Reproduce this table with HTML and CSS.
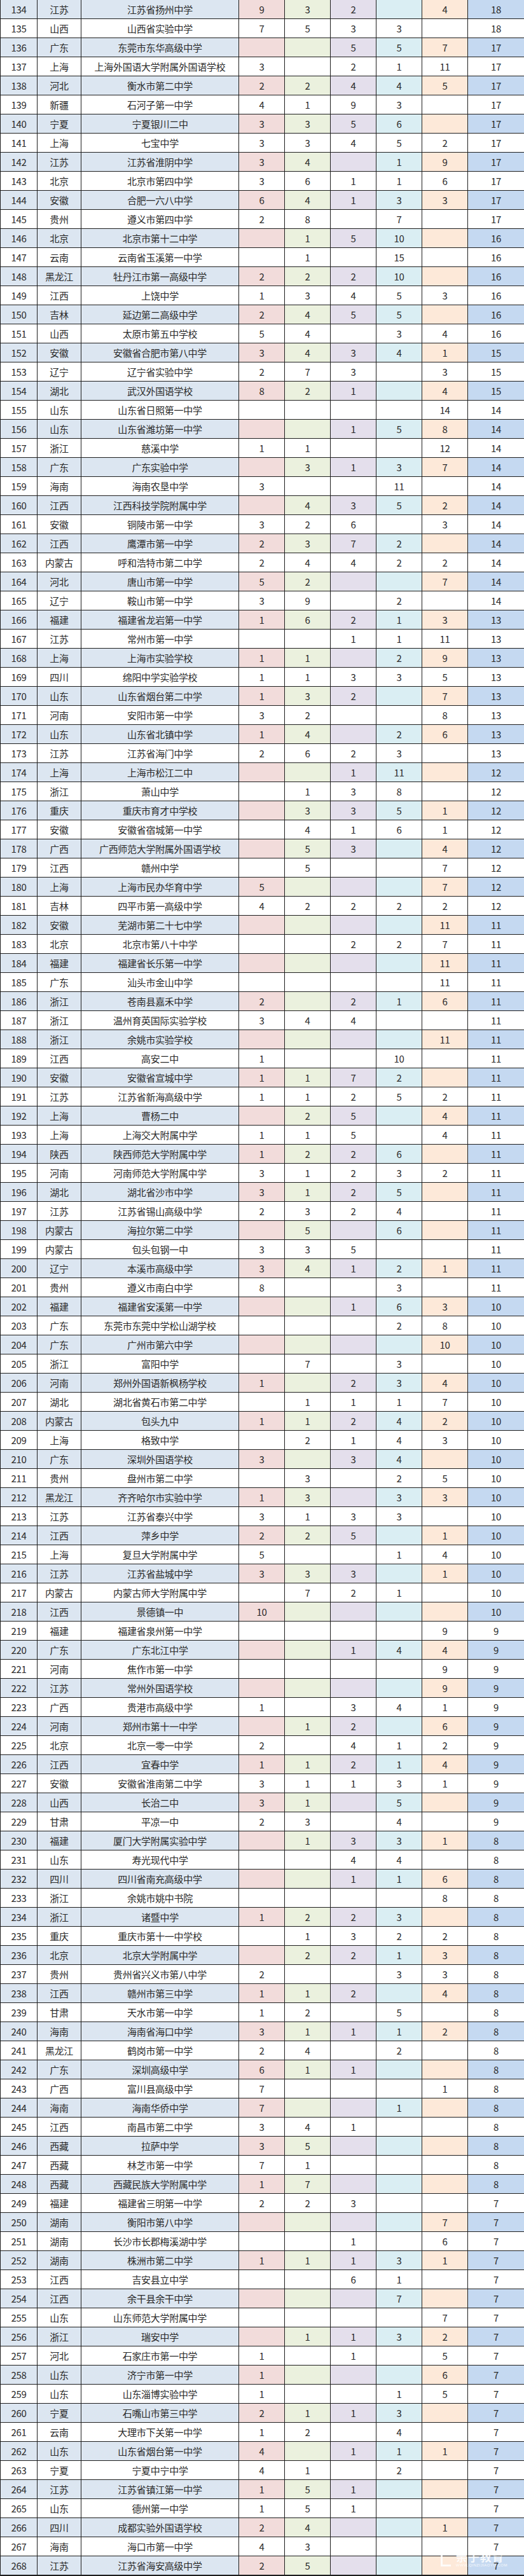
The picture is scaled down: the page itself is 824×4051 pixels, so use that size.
FILE: index.html
```html
<!DOCTYPE html>
<html lang="zh-CN">
<head>
<meta charset="utf-8">
<title>学校排名</title>
<link rel="stylesheet" href="styles.css">
</head>
<body>
<div class="sheet">
<div class="r a"><span>134</span><span>江苏</span><span>江苏省扬州中学</span><span>9</span><span>3</span><span>2</span><span></span><span>4</span><span>18</span></div>
<div class="r"><span>135</span><span>山西</span><span>山西省实验中学</span><span>7</span><span>5</span><span>3</span><span>3</span><span></span><span>18</span></div>
<div class="r a"><span>136</span><span>广东</span><span>东莞市东华高级中学</span><span></span><span></span><span>5</span><span>5</span><span>7</span><span>17</span></div>
<div class="r"><span>137</span><span>上海</span><span>上海外国语大学附属外国语学校</span><span>3</span><span></span><span>2</span><span>1</span><span>11</span><span>17</span></div>
<div class="r a"><span>138</span><span>河北</span><span>衡水市第二中学</span><span>2</span><span>2</span><span>4</span><span>4</span><span>5</span><span>17</span></div>
<div class="r"><span>139</span><span>新疆</span><span>石河子第一中学</span><span>4</span><span>1</span><span>9</span><span>3</span><span></span><span>17</span></div>
<div class="r a"><span>140</span><span>宁夏</span><span>宁夏银川二中</span><span>3</span><span>3</span><span>5</span><span>6</span><span></span><span>17</span></div>
<div class="r"><span>141</span><span>上海</span><span>七宝中学</span><span>3</span><span>3</span><span>4</span><span>5</span><span>2</span><span>17</span></div>
<div class="r a"><span>142</span><span>江苏</span><span>江苏省淮阴中学</span><span>3</span><span>4</span><span></span><span>1</span><span>9</span><span>17</span></div>
<div class="r"><span>143</span><span>北京</span><span>北京市第四中学</span><span>3</span><span>6</span><span>1</span><span>1</span><span>6</span><span>17</span></div>
<div class="r a"><span>144</span><span>安徽</span><span>合肥一六八中学</span><span>6</span><span>4</span><span>1</span><span>3</span><span>3</span><span>17</span></div>
<div class="r"><span>145</span><span>贵州</span><span>遵义市第四中学</span><span>2</span><span>8</span><span></span><span>7</span><span></span><span>17</span></div>
<div class="r a"><span>146</span><span>北京</span><span>北京市第十二中学</span><span></span><span>1</span><span>5</span><span>10</span><span></span><span>16</span></div>
<div class="r"><span>147</span><span>云南</span><span>云南省玉溪第一中学</span><span></span><span>1</span><span></span><span>15</span><span></span><span>16</span></div>
<div class="r a"><span>148</span><span>黑龙江</span><span>牡丹江市第一高级中学</span><span>2</span><span>2</span><span>2</span><span>10</span><span></span><span>16</span></div>
<div class="r"><span>149</span><span>江西</span><span>上饶中学</span><span>1</span><span>3</span><span>4</span><span>5</span><span>3</span><span>16</span></div>
<div class="r a"><span>150</span><span>吉林</span><span>延边第二高级中学</span><span>2</span><span>4</span><span>5</span><span>5</span><span></span><span>16</span></div>
<div class="r"><span>151</span><span>山西</span><span>太原市第五中学校</span><span>5</span><span>4</span><span></span><span>3</span><span>4</span><span>16</span></div>
<div class="r a"><span>152</span><span>安徽</span><span>安徽省合肥市第八中学</span><span>3</span><span>4</span><span>3</span><span>4</span><span>1</span><span>15</span></div>
<div class="r"><span>153</span><span>辽宁</span><span>辽宁省实验中学</span><span>2</span><span>7</span><span>3</span><span></span><span>3</span><span>15</span></div>
<div class="r a"><span>154</span><span>湖北</span><span>武汉外国语学校</span><span>8</span><span>2</span><span>1</span><span></span><span>4</span><span>15</span></div>
<div class="r"><span>155</span><span>山东</span><span>山东省日照第一中学</span><span></span><span></span><span></span><span></span><span>14</span><span>14</span></div>
<div class="r a"><span>156</span><span>山东</span><span>山东省潍坊第一中学</span><span></span><span></span><span>1</span><span>5</span><span>8</span><span>14</span></div>
<div class="r"><span>157</span><span>浙江</span><span>慈溪中学</span><span>1</span><span>1</span><span></span><span></span><span>12</span><span>14</span></div>
<div class="r a"><span>158</span><span>广东</span><span>广东实验中学</span><span></span><span>3</span><span>1</span><span>3</span><span>7</span><span>14</span></div>
<div class="r"><span>159</span><span>海南</span><span>海南农垦中学</span><span>3</span><span></span><span></span><span>11</span><span></span><span>14</span></div>
<div class="r a"><span>160</span><span>江西</span><span>江西科技学院附属中学</span><span></span><span>4</span><span>3</span><span>5</span><span>2</span><span>14</span></div>
<div class="r"><span>161</span><span>安徽</span><span>铜陵市第一中学</span><span>3</span><span>2</span><span>6</span><span></span><span>3</span><span>14</span></div>
<div class="r a"><span>162</span><span>江西</span><span>鹰潭市第一中学</span><span>2</span><span>3</span><span>7</span><span>2</span><span></span><span>14</span></div>
<div class="r"><span>163</span><span>内蒙古</span><span>呼和浩特市第二中学</span><span>2</span><span>4</span><span>4</span><span>2</span><span>2</span><span>14</span></div>
<div class="r a"><span>164</span><span>河北</span><span>唐山市第一中学</span><span>5</span><span>2</span><span></span><span></span><span>7</span><span>14</span></div>
<div class="r"><span>165</span><span>辽宁</span><span>鞍山市第一中学</span><span>3</span><span>9</span><span></span><span>2</span><span></span><span>14</span></div>
<div class="r a"><span>166</span><span>福建</span><span>福建省龙岩第一中学</span><span>1</span><span>6</span><span>2</span><span>1</span><span>3</span><span>13</span></div>
<div class="r"><span>167</span><span>江苏</span><span>常州市第一中学</span><span></span><span></span><span>1</span><span>1</span><span>11</span><span>13</span></div>
<div class="r a"><span>168</span><span>上海</span><span>上海市实验学校</span><span>1</span><span>1</span><span></span><span>2</span><span>9</span><span>13</span></div>
<div class="r"><span>169</span><span>四川</span><span>绵阳中学实验学校</span><span>1</span><span>1</span><span>3</span><span>3</span><span>5</span><span>13</span></div>
<div class="r a"><span>170</span><span>山东</span><span>山东省烟台第二中学</span><span>1</span><span>3</span><span>2</span><span></span><span>7</span><span>13</span></div>
<div class="r"><span>171</span><span>河南</span><span>安阳市第一中学</span><span>3</span><span>2</span><span></span><span></span><span>8</span><span>13</span></div>
<div class="r a"><span>172</span><span>山东</span><span>山东省北镇中学</span><span>1</span><span>4</span><span></span><span>2</span><span>6</span><span>13</span></div>
<div class="r"><span>173</span><span>江苏</span><span>江苏省海门中学</span><span>2</span><span>6</span><span>2</span><span>3</span><span></span><span>13</span></div>
<div class="r a"><span>174</span><span>上海</span><span>上海市松江二中</span><span></span><span></span><span>1</span><span>11</span><span></span><span>12</span></div>
<div class="r"><span>175</span><span>浙江</span><span>萧山中学</span><span></span><span>1</span><span>3</span><span>8</span><span></span><span>12</span></div>
<div class="r a"><span>176</span><span>重庆</span><span>重庆市育才中学校</span><span></span><span>3</span><span>3</span><span>5</span><span>1</span><span>12</span></div>
<div class="r"><span>177</span><span>安徽</span><span>安徽省宿城第一中学</span><span></span><span>4</span><span>1</span><span>6</span><span>1</span><span>12</span></div>
<div class="r a"><span>178</span><span>广西</span><span>广西师范大学附属外国语学校</span><span></span><span>5</span><span>3</span><span></span><span>4</span><span>12</span></div>
<div class="r"><span>179</span><span>江西</span><span>赣州中学</span><span></span><span>5</span><span></span><span></span><span>7</span><span>12</span></div>
<div class="r a"><span>180</span><span>上海</span><span>上海市民办华育中学</span><span>5</span><span></span><span></span><span></span><span>7</span><span>12</span></div>
<div class="r"><span>181</span><span>吉林</span><span>四平市第一高级中学</span><span>4</span><span>2</span><span>2</span><span>2</span><span>2</span><span>12</span></div>
<div class="r a"><span>182</span><span>安徽</span><span>芜湖市第二十七中学</span><span></span><span></span><span></span><span></span><span>11</span><span>11</span></div>
<div class="r"><span>183</span><span>北京</span><span>北京市第八十中学</span><span></span><span></span><span>2</span><span>2</span><span>7</span><span>11</span></div>
<div class="r a"><span>184</span><span>福建</span><span>福建省长乐第一中学</span><span></span><span></span><span></span><span></span><span>11</span><span>11</span></div>
<div class="r"><span>185</span><span>广东</span><span>汕头市金山中学</span><span></span><span></span><span></span><span></span><span>11</span><span>11</span></div>
<div class="r a"><span>186</span><span>浙江</span><span>苍南县嘉禾中学</span><span>2</span><span></span><span>2</span><span>1</span><span>6</span><span>11</span></div>
<div class="r"><span>187</span><span>浙江</span><span>温州育英国际实验学校</span><span>3</span><span>4</span><span>4</span><span></span><span></span><span>11</span></div>
<div class="r a"><span>188</span><span>浙江</span><span>余姚市实验学校</span><span></span><span></span><span></span><span></span><span>11</span><span>11</span></div>
<div class="r"><span>189</span><span>江西</span><span>高安二中</span><span>1</span><span></span><span></span><span>10</span><span></span><span>11</span></div>
<div class="r a"><span>190</span><span>安徽</span><span>安徽省宣城中学</span><span>1</span><span>1</span><span>7</span><span>2</span><span></span><span>11</span></div>
<div class="r"><span>191</span><span>江苏</span><span>江苏省新海高级中学</span><span>1</span><span>1</span><span>2</span><span>5</span><span>2</span><span>11</span></div>
<div class="r a"><span>192</span><span>上海</span><span>曹杨二中</span><span></span><span>2</span><span>5</span><span></span><span>4</span><span>11</span></div>
<div class="r"><span>193</span><span>上海</span><span>上海交大附属中学</span><span>1</span><span>1</span><span>5</span><span></span><span>4</span><span>11</span></div>
<div class="r a"><span>194</span><span>陕西</span><span>陕西师范大学附属中学</span><span>1</span><span>2</span><span>2</span><span>6</span><span></span><span>11</span></div>
<div class="r"><span>195</span><span>河南</span><span>河南师范大学附属中学</span><span>3</span><span>1</span><span>2</span><span>3</span><span>2</span><span>11</span></div>
<div class="r a"><span>196</span><span>湖北</span><span>湖北省沙市中学</span><span>3</span><span>1</span><span>2</span><span>5</span><span></span><span>11</span></div>
<div class="r"><span>197</span><span>江苏</span><span>江苏省锡山高级中学</span><span>2</span><span>3</span><span>2</span><span>4</span><span></span><span>11</span></div>
<div class="r a"><span>198</span><span>内蒙古</span><span>海拉尔第二中学</span><span></span><span>5</span><span></span><span>6</span><span></span><span>11</span></div>
<div class="r"><span>199</span><span>内蒙古</span><span>包头包钢一中</span><span>3</span><span>3</span><span>5</span><span></span><span></span><span>11</span></div>
<div class="r a"><span>200</span><span>辽宁</span><span>本溪市高级中学</span><span>3</span><span>4</span><span>1</span><span>2</span><span>1</span><span>11</span></div>
<div class="r"><span>201</span><span>贵州</span><span>遵义市南白中学</span><span>8</span><span></span><span></span><span>3</span><span></span><span>11</span></div>
<div class="r a"><span>202</span><span>福建</span><span>福建省安溪第一中学</span><span></span><span></span><span>1</span><span>6</span><span>3</span><span>10</span></div>
<div class="r"><span>203</span><span>广东</span><span>东莞市东莞中学松山湖学校</span><span></span><span></span><span></span><span>2</span><span>8</span><span>10</span></div>
<div class="r a"><span>204</span><span>广东</span><span>广州市第六中学</span><span></span><span></span><span></span><span></span><span>10</span><span>10</span></div>
<div class="r"><span>205</span><span>浙江</span><span>富阳中学</span><span></span><span>7</span><span></span><span>3</span><span></span><span>10</span></div>
<div class="r a"><span>206</span><span>河南</span><span>郑州外国语新枫杨学校</span><span>1</span><span></span><span>2</span><span>3</span><span>4</span><span>10</span></div>
<div class="r"><span>207</span><span>湖北</span><span>湖北省黄石市第二中学</span><span></span><span>1</span><span>1</span><span>1</span><span>7</span><span>10</span></div>
<div class="r a"><span>208</span><span>内蒙古</span><span>包头九中</span><span>1</span><span>1</span><span>2</span><span>4</span><span>2</span><span>10</span></div>
<div class="r"><span>209</span><span>上海</span><span>格致中学</span><span></span><span>2</span><span>1</span><span>4</span><span>3</span><span>10</span></div>
<div class="r a"><span>210</span><span>广东</span><span>深圳外国语学校</span><span>3</span><span></span><span>3</span><span>4</span><span></span><span>10</span></div>
<div class="r"><span>211</span><span>贵州</span><span>盘州市第二中学</span><span></span><span>3</span><span></span><span>2</span><span>5</span><span>10</span></div>
<div class="r a"><span>212</span><span>黑龙江</span><span>齐齐哈尔市实验中学</span><span>1</span><span>3</span><span></span><span>3</span><span>3</span><span>10</span></div>
<div class="r"><span>213</span><span>江苏</span><span>江苏省泰兴中学</span><span>3</span><span>1</span><span>3</span><span>3</span><span></span><span>10</span></div>
<div class="r a"><span>214</span><span>江西</span><span>萍乡中学</span><span>2</span><span>2</span><span>5</span><span></span><span>1</span><span>10</span></div>
<div class="r"><span>215</span><span>上海</span><span>复旦大学附属中学</span><span>5</span><span></span><span></span><span>1</span><span>4</span><span>10</span></div>
<div class="r a"><span>216</span><span>江苏</span><span>江苏省盐城中学</span><span>3</span><span>3</span><span>3</span><span></span><span>1</span><span>10</span></div>
<div class="r"><span>217</span><span>内蒙古</span><span>内蒙古师大学附属中学</span><span></span><span>7</span><span>2</span><span>1</span><span></span><span>10</span></div>
<div class="r a"><span>218</span><span>江西</span><span>景德镇一中</span><span>10</span><span></span><span></span><span></span><span></span><span>10</span></div>
<div class="r"><span>219</span><span>福建</span><span>福建省泉州第一中学</span><span></span><span></span><span></span><span></span><span>9</span><span>9</span></div>
<div class="r a"><span>220</span><span>广东</span><span>广东北江中学</span><span></span><span></span><span>1</span><span>4</span><span>4</span><span>9</span></div>
<div class="r"><span>221</span><span>河南</span><span>焦作市第一中学</span><span></span><span></span><span></span><span></span><span>9</span><span>9</span></div>
<div class="r a"><span>222</span><span>江苏</span><span>常州外国语学校</span><span></span><span></span><span></span><span></span><span>9</span><span>9</span></div>
<div class="r"><span>223</span><span>广西</span><span>贵港市高级中学</span><span>1</span><span></span><span>3</span><span>4</span><span>1</span><span>9</span></div>
<div class="r a"><span>224</span><span>河南</span><span>郑州市第十一中学</span><span></span><span>1</span><span>2</span><span></span><span>6</span><span>9</span></div>
<div class="r"><span>225</span><span>北京</span><span>北京一零一中学</span><span>2</span><span></span><span>4</span><span>1</span><span>2</span><span>9</span></div>
<div class="r a"><span>226</span><span>江西</span><span>宜春中学</span><span>1</span><span>1</span><span>2</span><span>1</span><span>4</span><span>9</span></div>
<div class="r"><span>227</span><span>安徽</span><span>安徽省淮南第二中学</span><span>3</span><span>1</span><span>1</span><span>3</span><span>1</span><span>9</span></div>
<div class="r a"><span>228</span><span>山西</span><span>长治二中</span><span>3</span><span>1</span><span></span><span>5</span><span></span><span>9</span></div>
<div class="r"><span>229</span><span>甘肃</span><span>平凉一中</span><span>2</span><span>3</span><span></span><span>4</span><span></span><span>9</span></div>
<div class="r a"><span>230</span><span>福建</span><span>厦门大学附属实验中学</span><span></span><span>1</span><span>3</span><span>3</span><span>1</span><span>8</span></div>
<div class="r"><span>231</span><span>山东</span><span>寿光现代中学</span><span></span><span></span><span>4</span><span>4</span><span></span><span>8</span></div>
<div class="r a"><span>232</span><span>四川</span><span>四川省南充高级中学</span><span></span><span></span><span>1</span><span>1</span><span>6</span><span>8</span></div>
<div class="r"><span>233</span><span>浙江</span><span>余姚市姚中书院</span><span></span><span></span><span></span><span></span><span>8</span><span>8</span></div>
<div class="r a"><span>234</span><span>浙江</span><span>诸暨中学</span><span>1</span><span>2</span><span>2</span><span>3</span><span></span><span>8</span></div>
<div class="r"><span>235</span><span>重庆</span><span>重庆市第十一中学校</span><span></span><span>1</span><span>3</span><span>2</span><span>2</span><span>8</span></div>
<div class="r a"><span>236</span><span>北京</span><span>北京大学附属中学</span><span></span><span>2</span><span>2</span><span>1</span><span>3</span><span>8</span></div>
<div class="r"><span>237</span><span>贵州</span><span>贵州省兴义市第八中学</span><span>2</span><span></span><span></span><span>3</span><span>3</span><span>8</span></div>
<div class="r a"><span>238</span><span>江西</span><span>赣州市第三中学</span><span>1</span><span>1</span><span>2</span><span></span><span>4</span><span>8</span></div>
<div class="r"><span>239</span><span>甘肃</span><span>天水市第一中学</span><span>1</span><span>2</span><span></span><span>5</span><span></span><span>8</span></div>
<div class="r a"><span>240</span><span>海南</span><span>海南省海口中学</span><span>3</span><span>1</span><span>1</span><span>1</span><span>2</span><span>8</span></div>
<div class="r"><span>241</span><span>黑龙江</span><span>鹤岗市第一中学</span><span>2</span><span>4</span><span></span><span>2</span><span></span><span>8</span></div>
<div class="r a"><span>242</span><span>广东</span><span>深圳高级中学</span><span>6</span><span>1</span><span>1</span><span></span><span></span><span>8</span></div>
<div class="r"><span>243</span><span>广西</span><span>富川县高级中学</span><span>7</span><span></span><span></span><span></span><span>1</span><span>8</span></div>
<div class="r a"><span>244</span><span>海南</span><span>海南华侨中学</span><span>7</span><span></span><span></span><span>1</span><span></span><span>8</span></div>
<div class="r"><span>245</span><span>江西</span><span>南昌市第二中学</span><span>3</span><span>4</span><span>1</span><span></span><span></span><span>8</span></div>
<div class="r a"><span>246</span><span>西藏</span><span>拉萨中学</span><span>3</span><span>5</span><span></span><span></span><span></span><span>8</span></div>
<div class="r"><span>247</span><span>西藏</span><span>林芝市第一中学</span><span>7</span><span>1</span><span></span><span></span><span></span><span>8</span></div>
<div class="r a"><span>248</span><span>西藏</span><span>西藏民族大学附属中学</span><span>1</span><span>7</span><span></span><span></span><span></span><span>8</span></div>
<div class="r"><span>249</span><span>福建</span><span>福建省三明第一中学</span><span>2</span><span>2</span><span>3</span><span></span><span></span><span>7</span></div>
<div class="r a"><span>250</span><span>湖南</span><span>衡阳市第八中学</span><span></span><span></span><span></span><span></span><span>7</span><span>7</span></div>
<div class="r"><span>251</span><span>湖南</span><span>长沙市长郡梅溪湖中学</span><span></span><span></span><span>1</span><span></span><span>6</span><span>7</span></div>
<div class="r a"><span>252</span><span>湖南</span><span>株洲市第二中学</span><span>1</span><span>1</span><span>1</span><span>3</span><span>1</span><span>7</span></div>
<div class="r"><span>253</span><span>江西</span><span>吉安县立中学</span><span></span><span></span><span>6</span><span>1</span><span></span><span>7</span></div>
<div class="r a"><span>254</span><span>江西</span><span>余干县余干中学</span><span></span><span></span><span></span><span>7</span><span></span><span>7</span></div>
<div class="r"><span>255</span><span>山东</span><span>山东师范大学附属中学</span><span></span><span></span><span></span><span></span><span>7</span><span>7</span></div>
<div class="r a"><span>256</span><span>浙江</span><span>瑞安中学</span><span></span><span>1</span><span>1</span><span>3</span><span>2</span><span>7</span></div>
<div class="r"><span>257</span><span>河北</span><span>石家庄市第一中学</span><span>1</span><span></span><span>1</span><span></span><span>5</span><span>7</span></div>
<div class="r a"><span>258</span><span>山东</span><span>济宁市第一中学</span><span>1</span><span></span><span></span><span></span><span>6</span><span>7</span></div>
<div class="r"><span>259</span><span>山东</span><span>山东淄博实验中学</span><span>1</span><span></span><span></span><span>1</span><span>5</span><span>7</span></div>
<div class="r a"><span>260</span><span>宁夏</span><span>石嘴山市第三中学</span><span>2</span><span>1</span><span>1</span><span>3</span><span></span><span>7</span></div>
<div class="r"><span>261</span><span>云南</span><span>大理市下关第一中学</span><span>1</span><span>2</span><span></span><span>4</span><span></span><span>7</span></div>
<div class="r a"><span>262</span><span>山东</span><span>山东省烟台第一中学</span><span>4</span><span></span><span>1</span><span>1</span><span>1</span><span>7</span></div>
<div class="r"><span>263</span><span>宁夏</span><span>宁夏中宁中学</span><span>4</span><span>1</span><span></span><span>2</span><span></span><span>7</span></div>
<div class="r a"><span>264</span><span>江苏</span><span>江苏省镇江第一中学</span><span>1</span><span>5</span><span>1</span><span></span><span></span><span>7</span></div>
<div class="r"><span>265</span><span>山东</span><span>德州第一中学</span><span>1</span><span>5</span><span>1</span><span></span><span></span><span>7</span></div>
<div class="r a"><span>266</span><span>四川</span><span>成都实验外国语学校</span><span>2</span><span>4</span><span></span><span></span><span>1</span><span>7</span></div>
<div class="r"><span>267</span><span>海南</span><span>海口市第一中学</span><span>4</span><span>3</span><span></span><span></span><span></span><span>7</span></div>
<div class="r a"><span>268</span><span>江苏</span><span>江苏省海安高级中学</span><span>2</span><span>5</span><span></span><span></span><span></span><span>7</span></div>
<div class="mark"><span class="mark-logo"></span><span class="mark-text">亲子教育</span><span class="mark-url">WWW.QINZIJIAOYU.COM</span></div>
</div>
</body>
</html>
```

FILE: styles.css
```css
html, body {
  margin: 0;
  padding: 0;
  background: #ffffff;
}

.sheet {
  position: relative;
  width: 824px;
  border-bottom: 1px solid #1e1e1e;
  font-family: "Noto Sans CJK SC", "Noto Sans", sans-serif;
  font-size: 15px;
  color: #2a2a2a;
}

.r {
  display: grid;
  grid-template-columns: 59px 69px 248px 72px 72px 72px 72px 72px 88px;
  height: 30px;
  box-sizing: border-box;
  border-bottom: 1px solid #1e1e1e;
}

.r:last-of-type {
  border-bottom: none;
}

.r > span {
  display: flex;
  align-items: center;
  justify-content: center;
  box-sizing: border-box;
  border-right: 1px solid #1e1e1e;
  white-space: nowrap;
  letter-spacing: -0.3px;
}

.r > span:first-child {
  border-left: 1px solid #1e1e1e;
}

.r > span:last-child {
  border-right: none;
}

.a > span:nth-child(1),
.a > span:nth-child(2),
.a > span:nth-child(3) { background: #dce6f1; }
.a > span:nth-child(4) { background: #f2dcdb; }
.a > span:nth-child(5) { background: #ebf1de; }
.a > span:nth-child(6) { background: #e4dfec; }
.a > span:nth-child(7) { background: #daeef3; }
.a > span:nth-child(8) { background: #fde9d9; }
.a > span:nth-child(9) { background: #c5d9f1; }

.mark {
  position: absolute;
  right: 26px;
  bottom: 12px;
  display: grid;
  grid-template-columns: 18px auto;
  grid-template-rows: 20px 8px;
  column-gap: 6px;
  align-items: center;
  opacity: 0.85;
  pointer-events: none;
}

.mark-logo {
  grid-row: 1 / 3;
  width: 16px;
  height: 24px;
  border: 3px solid #ffffff;
  border-top-width: 0;
  border-right-width: 0;
  box-sizing: border-box;
}

.mark-text {
  color: #ffffff;
  font-size: 18px;
  font-weight: 700;
  letter-spacing: 1px;
}

.mark-url {
  color: #ffffff;
  font-family: "Liberation Sans", sans-serif;
  font-size: 6px;
  letter-spacing: 0.5px;
}
```
